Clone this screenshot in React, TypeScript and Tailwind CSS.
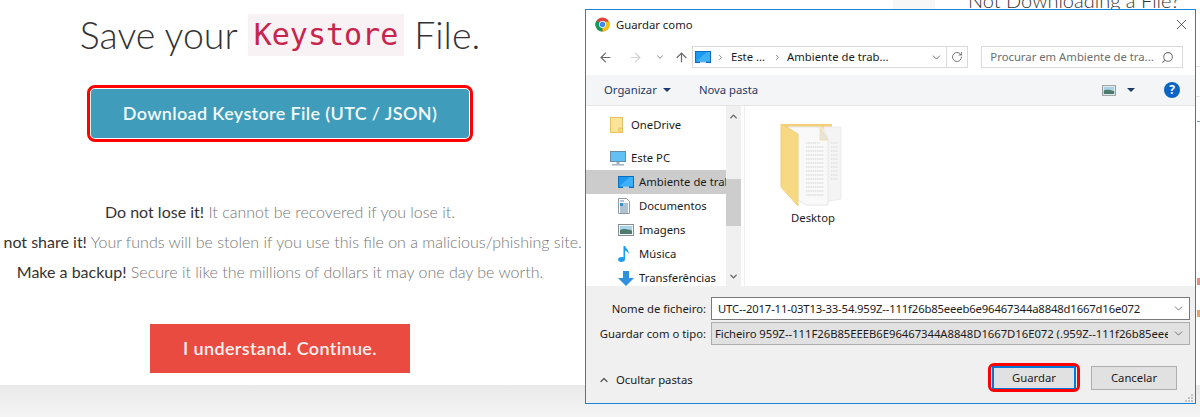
import { ArrowLeft, ArrowRight, ArrowUp, ChevronDown, ChevronUp, RotateCw, Search, X } from "lucide-react";
import type { ReactNode } from "react";

const segoe = "font-['Noto_Sans',sans-serif] text-[11.3px] leading-none";

function ChromeLogo() {
  return (
    <svg width="15" height="15" viewBox="0 0 16 16">
      <circle cx="8" cy="8" r="7.5" fill="#db4437" />
      <path d="M8 8 1.5 4.2A7.5 7.5 0 0 0 8 15.5Z" fill="#0f9d58" />
      <path d="M8 8 8 15.5A7.5 7.5 0 0 0 15 5H8Z" fill="#f4c20d" />
      <circle cx="8" cy="8" r="3.7" fill="#fff" />
      <circle cx="8" cy="8" r="2.9" fill="#4285f4" />
    </svg>
  );
}

function DesktopIcon() {
  return (
    <svg width="16" height="12" viewBox="0 0 16 12">
      <rect width="16" height="12" fill="#0b6fc0" />
      <rect x="1" y="1" width="14" height="9.5" fill="#1d9af0" />
      <path d="M1 10.5 12 1h3v9.5Z" fill="#3db0f7" />
      <rect x="5" y="10.7" width="6" height="1" fill="#fff" />
    </svg>
  );
}

function FolderSmall() {
  return (
    <svg width="13" height="16" viewBox="0 0 13 16">
      <rect x="0.5" y="0.5" width="12" height="15" fill="#fbe49a" stroke="#e9c25f" />
      <rect x="9" y="11" width="3.5" height="4.5" fill="#f7d774" stroke="#e9c25f" />
    </svg>
  );
}

function PcIcon() {
  return (
    <svg width="16" height="15" viewBox="0 0 16 15">
      <rect x="0.5" y="0.5" width="15" height="10" fill="#62c0f4" stroke="#6a8ca6" />
      <rect x="6.5" y="11" width="3" height="2" fill="#9fb2bf" />
      <rect x="2" y="13" width="12" height="1.5" fill="#a5b5c0" />
    </svg>
  );
}

function DocIcon() {
  return (
    <svg width="12" height="16" viewBox="0 0 12 16">
      <path d="M.5.5h8l3 3v12H.5Z" fill="#fff" stroke="#8f9aa3" />
      <path d="M2 3h4M2 6h8M2 8h8M2 10h8M2 12h8M2 14h8" stroke="#5f86a8" />
      <rect x="2" y="5" width="3" height="3" fill="#2f8fd0" />
    </svg>
  );
}

function PictureIcon({ w = 16, h = 12 }: { w?: number; h?: number }) {
  return (
    <svg width={w} height={h} viewBox="0 0 16 12">
      <rect x="0.5" y="0.5" width="15" height="11" fill="#eef4f7" stroke="#8a8f93" />
      <rect x="2" y="2" width="12" height="4" fill="#a9d3e6" />
      <path d="M2 6c3-1.500 6-1 12 .5V10H2Z" fill="#4d7c6e" />
    </svg>
  );
}

function NoteIcon() {
  return (
    <svg width="12" height="16" viewBox="0 0 12 16">
      <path d="M5.500 0h1.600c.3 2.500 4.400 3.500 3.400 8-.5-2-2.200-3-3.400-3.300V13c0 1.800-1.700 3-3.700 3C1.500 16 0 15 0 13.600s1.700-2.600 3.600-2.600c.7 0 1.400.1 1.900.4Z" fill="#1f9bf0" />
    </svg>
  );
}

function DownIcon() {
  return (
    <svg width="16" height="15" viewBox="0 0 16 15">
      <path d="M5 0h6v7h5l-8 8-8-8h5Z" fill="#2f8fe0" />
    </svg>
  );
}

function BigFolder() {
  return (
    <svg width="66" height="84" viewBox="0 0 66 84">
      <path d="M1 1h51v12H1Z" fill="#f3cf7c" />
      <path d="M44 4h17v72l-17 3Z" fill="#f4f4f4" stroke="#ececec" />
      <path d="M8 4h34l6 12v66H26L8 70Z" fill="#f9f9f9" stroke="#e6e6e6" />
      <path d="M26 20h14M26 24h18M26 28h18M26 32h18M26 36h18M26 40h18M26 44h18M26 48h18M26 52h18M26 56h18M26 60h18M26 64h18M26 68h18M26 72h18" stroke="#c9c9c9" strokeWidth="0.8" strokeDasharray="1.500 .7" />
      <path d="M51 20h7M51 24h7M51 28h7M51 32h7M51 36h7M51 40h7M51 44h7M51 48h7M51 52h7M51 56h7" stroke="#cfcfcf" strokeWidth="0.8" strokeDasharray="1.500 .7" />
      <path d="M40 4l8 13h-8Z" fill="#e4e4e4" stroke="#f3dfa8" />
      <path d="M1 1l17 10v72L1 64Z" fill="#f8d983" stroke="#f2cf75" />
    </svg>
  );
}

function NavRow({ icon, label, active, indent }: { icon: ReactNode; label: string; active?: boolean; indent?: boolean }) {
  return (
    <div className={`flex h-6 shrink-0 items-center overflow-hidden whitespace-nowrap ${indent ? "pl-[32px]" : "pl-[24px]"} ${active ? "bg-[#cccccc]" : ""}`}>
      <span className="flex w-[21px] shrink-0 items-center">{icon}</span>
      <span className={`${segoe} text-[#1b1b1b]`}>{label}</span>
    </div>
  );
}

function SaveDialog() {
  return (
    <div className={`${segoe} absolute left-[585px] top-[9px] flex h-[395px] w-[611px] flex-col whitespace-nowrap border border-[#1883d7] bg-white text-[#1b1b1b]`}>
      <div className="flex h-[29px] shrink-0 items-center pl-[9px] pr-[5px]">
        <ChromeLogo />
        <span className="ml-[6px]">Guardar como</span>
        <X className="ml-auto" size={17} strokeWidth={1} />
      </div>

      <div className="flex h-[36px] shrink-0 items-center pl-[12px] pr-[12px]">
        <ArrowLeft size={15} strokeWidth={2} className="text-[#6b6b6b]" />
        <ArrowRight size={15} strokeWidth={2} className="ml-[15px] text-[#d4d4d4]" />
        <ChevronDown size={10} strokeWidth={2.5} className="ml-[12px] text-[#9a9a9a]" />
        <ArrowUp size={15} strokeWidth={2} className="ml-[9px] text-[#6b6b6b]" />
        <div className="ml-[3px] flex h-[22px] w-[277px] items-center border border-[#d9d9d9] pl-[2px]">
          <DesktopIcon />
          <ChevronDown size={9} strokeWidth={2.5} className="ml-[5px] -rotate-90 text-[#8a8a8a]" />
          <span className="ml-[6px]">Este ...</span>
          <ChevronDown size={9} strokeWidth={2.5} className="ml-[8px] -rotate-90 text-[#8a8a8a]" />
          <span className="ml-[5px]">Ambiente de trab...</span>
          <ChevronDown size={13} strokeWidth={1.8} className="ml-auto mr-[3px] text-[#6d6d6d]" />
          <div className="flex h-full w-[21px] items-center justify-center border-l border-[#d9d9d9]">
            <RotateCw size={12} strokeWidth={1.8} className="text-[#6d6d6d]" />
          </div>
        </div>
        <div className="ml-[13px] flex h-[22px] w-[202px] items-center justify-between border border-[#d9d9d9] pl-[8px] pr-[8px] text-[#6d6d6d]">
          <span>Procurar em Ambiente de tra...</span>
          <Search size={13} strokeWidth={2} className="-scale-x-100 text-[#7a7a7a]" />
        </div>
      </div>

      <div className="flex h-[31px] shrink-0 items-center border-b border-[#e5e5e5] bg-[#f4f5f7] pl-[18px] pr-[15px] text-[#1f3a68]">
        <span>Organizar</span>
        <span className="ml-[6px] h-0 w-0 border-x-[4px] border-t-[4px] border-x-transparent border-t-[#1f3a68]" />
        <span className="ml-[28px]">Nova pasta</span>
        <span className="ml-auto"><PictureIcon w={14} h={11} /></span>
        <span className="ml-[11px] h-0 w-0 border-x-[4px] border-t-[4px] border-x-transparent border-t-[#1f3a68]" />
        <span className="ml-[29px] flex h-4 w-4 items-center justify-center rounded-full bg-[#0a66c2] text-[12px] font-bold text-white">?</span>
      </div>

      <div className="flex min-h-0 flex-1">
        <div className="flex w-[140px] shrink-0 flex-col overflow-hidden pt-[7px]">
          <NavRow icon={<FolderSmall />} label="OneDrive" />
          <div className="h-[9px] shrink-0" />
          <NavRow icon={<PcIcon />} label="Este PC" />
          <NavRow icon={<DesktopIcon />} label="Ambiente de trabalho" active indent />
          <NavRow icon={<DocIcon />} label="Documentos" indent />
          <NavRow icon={<PictureIcon />} label="Imagens" indent />
          <NavRow icon={<NoteIcon />} label="Música" indent />
          <NavRow icon={<DownIcon />} label="Transferências" indent />
        </div>
        <div className="flex w-[15px] shrink-0 flex-col items-center bg-[#f0f0f0]">
          <ChevronUp size={11} strokeWidth={3} className="mt-[5px] text-[#606060]" />
          <div className="mt-[57px] h-[47px] w-full shrink-0 bg-[#cdcdcd]" />
          <ChevronDown size={11} strokeWidth={3} className="mt-auto mb-[4px] text-[#606060]" />
        </div>
        <div className="ml-[3px] flex flex-1 flex-col items-start border-l border-[#eeeeee] pl-[33px] pt-[17px]">
          <div className="flex w-[70px] flex-col items-center">
            <BigFolder />
            <span className="mt-[5px]">Desktop</span>
          </div>
        </div>
      </div>

      <div className="relative flex h-[117px] shrink-0 flex-col bg-[#f0f0f0] pr-[5px] pt-[11px]">
        <div className="flex items-center">
          <span className="w-[120px] shrink-0 text-right">Nome de ficheiro:</span>
          <div className="ml-[5px] flex h-[23px] min-w-0 flex-1 items-center justify-between border border-[#7a7a7a] bg-white pl-[6px] pr-[4px]">
            <span className="tracking-[-0.16px]">UTC--2017-11-03T13-33-54.959Z--111f26b85eeeb6e96467344a8848d1667d16e072</span>
            <ChevronDown size={13} strokeWidth={1.4} className="text-[#555555]" />
          </div>
        </div>
        <div className="mt-[2px] flex items-center">
          <span className="w-[120px] shrink-0 text-right">Guardar com o tipo:</span>
          <div className="ml-[5px] flex h-[23px] min-w-0 flex-1 items-center overflow-hidden border border-[#adadad] bg-[#e1e1e1] pl-[3px] pr-[4px]">
            <span className="min-w-0 flex-1 overflow-hidden tracking-[-0.04px]">Ficheiro 959Z--111F26B85EEEB6E96467344A8848D1667D16E072 (.959Z--111f26b85eeeb6e96467344a8848d1667d16e072)</span>
            <ChevronDown size={13} strokeWidth={1.4} className="ml-[4px] shrink-0 text-[#555555]" />
          </div>
        </div>
        <div className="mt-[21px] flex items-center pl-[12px] pr-[13px]">
          <div className="flex items-center pt-[4px]">
            <ChevronUp size={12} strokeWidth={2.5} className="text-[#555555]" />
            <span className="ml-[6px]">Ocultar pastas</span>
          </div>
          <button className="relative ml-auto h-[24px] w-[84px] border-2 border-[#0078d7] bg-[#e1e1e1]">
            Guardar
            <span className="absolute -inset-x-[6px] -bottom-[4px] -top-[5px] rounded-[6px] border-[3px] border-[#ff0000]" />
          </button>
          <button className="ml-[15px] h-[24px] w-[86px] border border-[#adadad] bg-[#e1e1e1]">Cancelar</button>
        </div>
        <svg className="absolute bottom-[1px] right-[2px]" width="8" height="8" viewBox="0 0 8 8" fill="#c4c4c4">
          <rect x="6" y="0" width="2" height="2" />
          <rect x="3" y="3" width="2" height="2" />
          <rect x="6" y="3" width="2" height="2" />
          <rect x="0" y="6" width="2" height="2" />
          <rect x="3" y="6" width="2" height="2" />
          <rect x="6" y="6" width="2" height="2" />
        </svg>
      </div>
    </div>
  );
}

export default function App() {
  return (
    <div className="relative flex h-[417px] w-[1200px] flex-col overflow-hidden bg-white font-['Lato',sans-serif]">
      <div className="flex h-[385px] shrink-0">
        <main className="flex w-[560px] shrink-0 flex-col items-center pt-[14px]">
          <h1 className="flex h-[42px] items-center whitespace-nowrap text-[37.5px] font-light text-[#333333]">
            Save your
            <code className="mx-[10px] bg-[#f9f2f4] px-[6px] py-[3px] font-['DejaVu_Sans_Mono',monospace] text-[30px] font-normal leading-[36px] text-[#c7254e]">Keystore</code>
            File.
          </h1>
          <button className="mt-[33px] h-[49px] w-[378px] rounded-[4px] bg-[#3f9cba] text-[18px] font-semibold tracking-[0.35px] text-[#f2f9fb] outline-3 outline-offset-1 outline-[#ff0000]">
            Download Keystore File (UTC / JSON)
          </button>
          <div className="mt-[64px] flex flex-col items-center gap-[10px] whitespace-nowrap text-[16px] font-light leading-[20px] text-[#777777]">
            <p><span className="font-normal text-[#333333]">Do not lose it!</span> It cannot be recovered if you lose it.</p>
            <p><span className="font-normal text-[#333333]">Do not share it!</span> Your funds will be stolen if you use this file on a malicious/phishing site.</p>
            <p><span className="font-normal text-[#333333]">Make a backup!</span> Secure it like the millions of dollars it may one day be worth.</p>
          </div>
          <button className="mt-[42px] h-[49px] w-[260px] bg-[#ea4b40] text-[18px] font-semibold tracking-[0.35px] text-[#fdf0ef]">I understand. Continue.</button>
        </main>
        <div className="ml-[333px] h-full w-[42px] shrink-0 bg-[#f7f7f7]" />
        <aside className="flex-1 overflow-hidden pl-[33px]">
          <h3 className="-mt-[12px] whitespace-nowrap text-[20px] font-light leading-[24px] text-[#333333]">Not Downloading a File?</h3>
          <div className="ml-auto mt-[54px] h-px w-[4px] bg-[#e5e5e5]" />
          <div className="ml-auto mt-[29px] h-px w-[4px] bg-[#e5e5e5]" />
          <div className="ml-auto mt-[24px] h-px w-[3px] bg-[#5b9bd5]" />
          <div className="ml-auto mt-[156px] h-[7px] w-[3px] bg-[#ea8a80]" />
          <div className="ml-auto mt-[25px] h-[7px] w-[3px] bg-[#f0a060]" />
        </aside>
      </div>
      <div className="flex-1 bg-gradient-to-b from-[#e9e9e9] to-[#f5f5f5]" />
      <SaveDialog />
    </div>
  );
}
